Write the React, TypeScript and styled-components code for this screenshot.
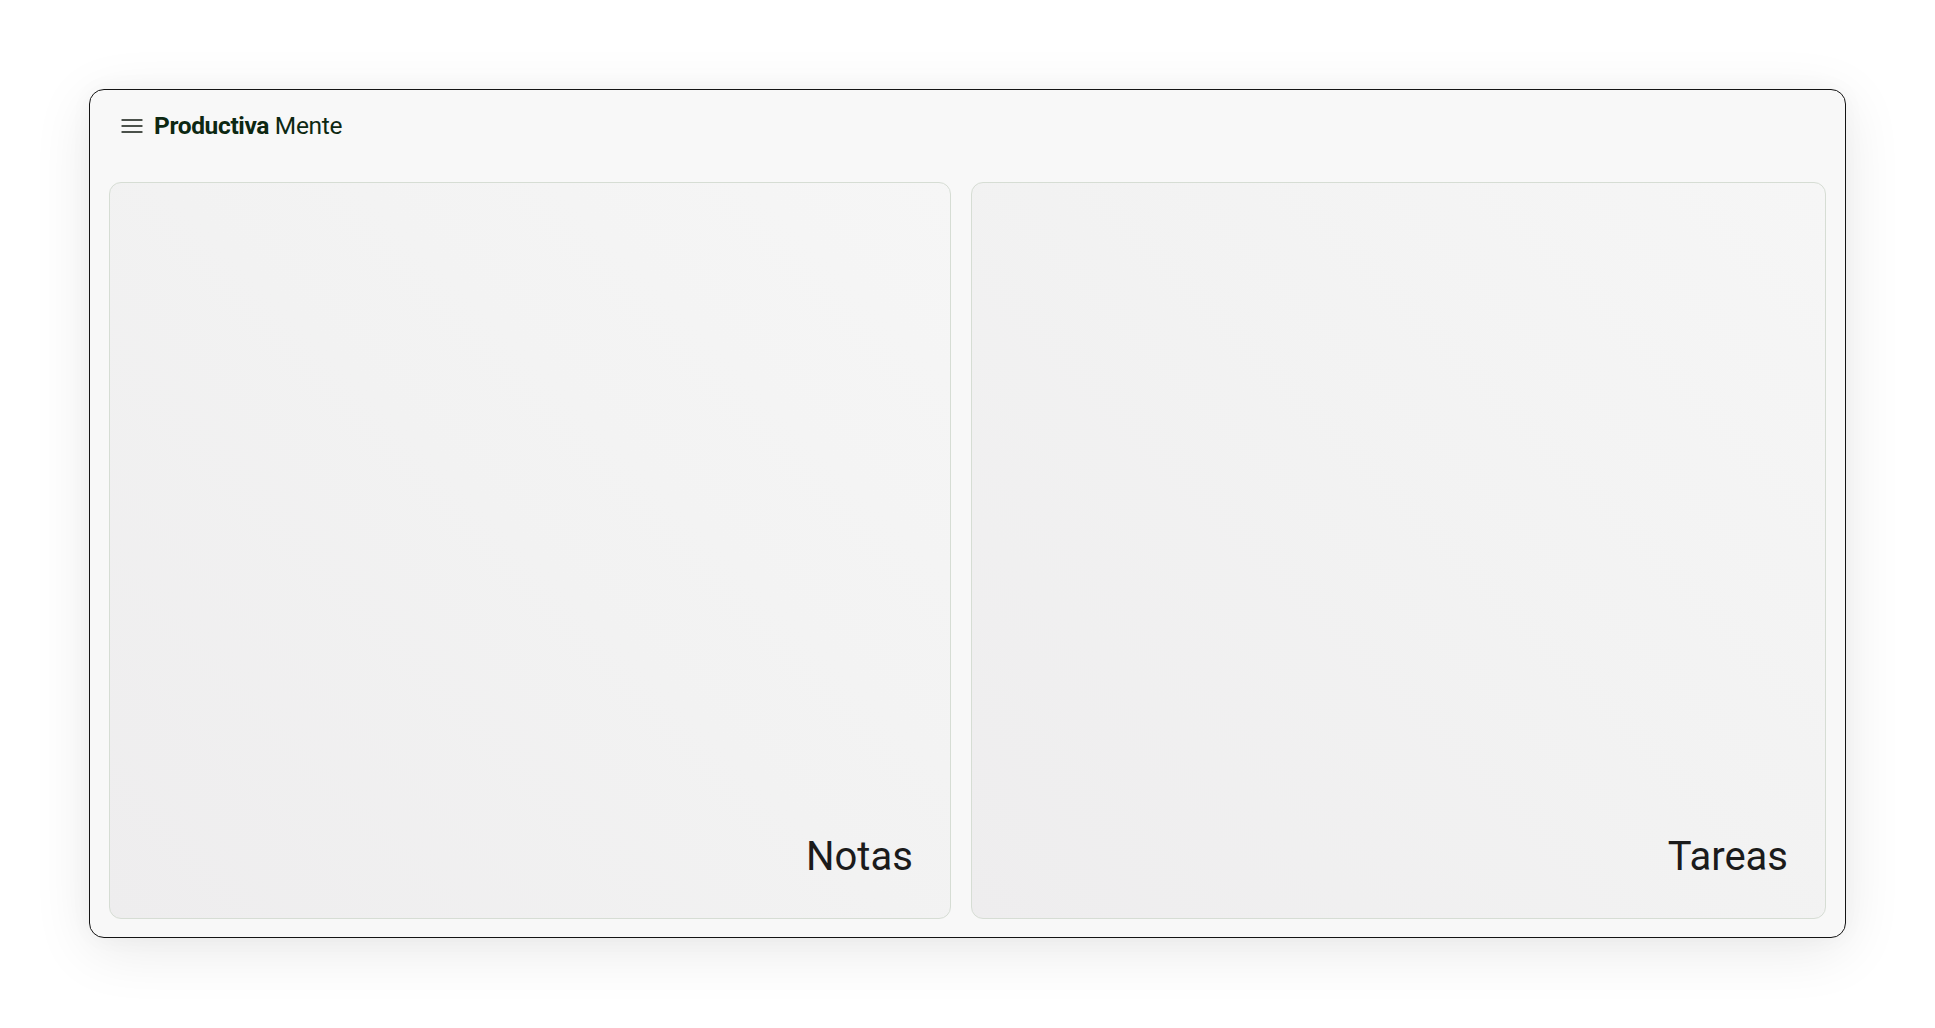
import React from "react";
import styled, { createGlobalStyle } from "styled-components";

const GlobalStyle = createGlobalStyle`
  html, body {
    margin: 0;
    padding: 0;
    background: #ffffff;
    font-family: Roboto, "Liberation Sans", sans-serif;
  }
  * { box-sizing: border-box; }
`;

const Page = styled.div`
  height: 100vh;
  padding: 89px 89px 90px;
  display: flex;
`;

const Card = styled.div`
  flex: 1;
  display: flex;
  flex-direction: column;
  background: #f8f8f8;
  border: 1px solid #141414;
  border-radius: 15px;
  box-shadow: 0 12px 60px rgba(0, 0, 0, 0.09), 0 0 24px rgba(0, 0, 0, 0.03);
  padding: 0 19px 18px;
`;

const Header = styled.header`
  height: 72px;
  display: flex;
  align-items: center;
  gap: 11px;
  padding-left: 12px;
`;

const MenuButton = styled.button`
  display: flex;
  align-items: center;
  justify-content: center;
  padding: 0;
  border: none;
  background: none;
  color: #4b514b;
  width: 22px;
  height: 22px;
`;

const Brand = styled.h1`
  margin: 0;
  font-family: Roboto, "Liberation Sans", sans-serif;
  font-size: 24.5px;
  font-weight: 400;
  color: #0d2812;
  letter-spacing: -0.35px;
  line-height: 1;
`;

const Strong = styled.strong`
  font-weight: 700;
`;

const Panels = styled.main`
  flex: 1;
  display: flex;
  gap: 20px;
  margin-top: 20px;
`;

const Panel = styled.section`
  flex: 1 1 auto;
  display: flex;
  align-items: flex-end;
  justify-content: flex-end;
  padding: 0 37px 37px;
  border: 1px solid #d6ddd4;
  border-radius: 12px;
  background: linear-gradient(45deg, #eeedee 0%, #f2f2f2 50%, #f6f6f6 100%);
`;

const PanelTitle = styled.h2`
  margin: 0;
  font-family: Roboto, "Liberation Sans", sans-serif;
  font-size: 40px;
  font-weight: 400;
  line-height: 48px;
  color: #1b1b1b;
`;

const MenuIcon = () => (
  <svg width="22" height="22" viewBox="0 0 22 22" fill="none">
    <rect x="0.5" y="4" width="21" height="2" rx="0.5" fill="currentColor" />
    <rect x="0.5" y="10" width="21" height="2" rx="0.5" fill="currentColor" />
    <rect x="0.5" y="16" width="21" height="2" rx="0.5" fill="currentColor" />
  </svg>
);

export default function App() {
  return (
    <>
      <GlobalStyle />
      <Page>
        <Card>
          <Header>
            <MenuButton aria-label="Menú">
              <MenuIcon />
            </MenuButton>
            <Brand>
              <Strong>Productiva</Strong> Mente
            </Brand>
          </Header>
          <Panels>
            <Panel>
              <PanelTitle>Notas</PanelTitle>
            </Panel>
            <Panel>
              <PanelTitle>Tareas</PanelTitle>
            </Panel>
          </Panels>
        </Card>
      </Page>
    </>
  );
}
